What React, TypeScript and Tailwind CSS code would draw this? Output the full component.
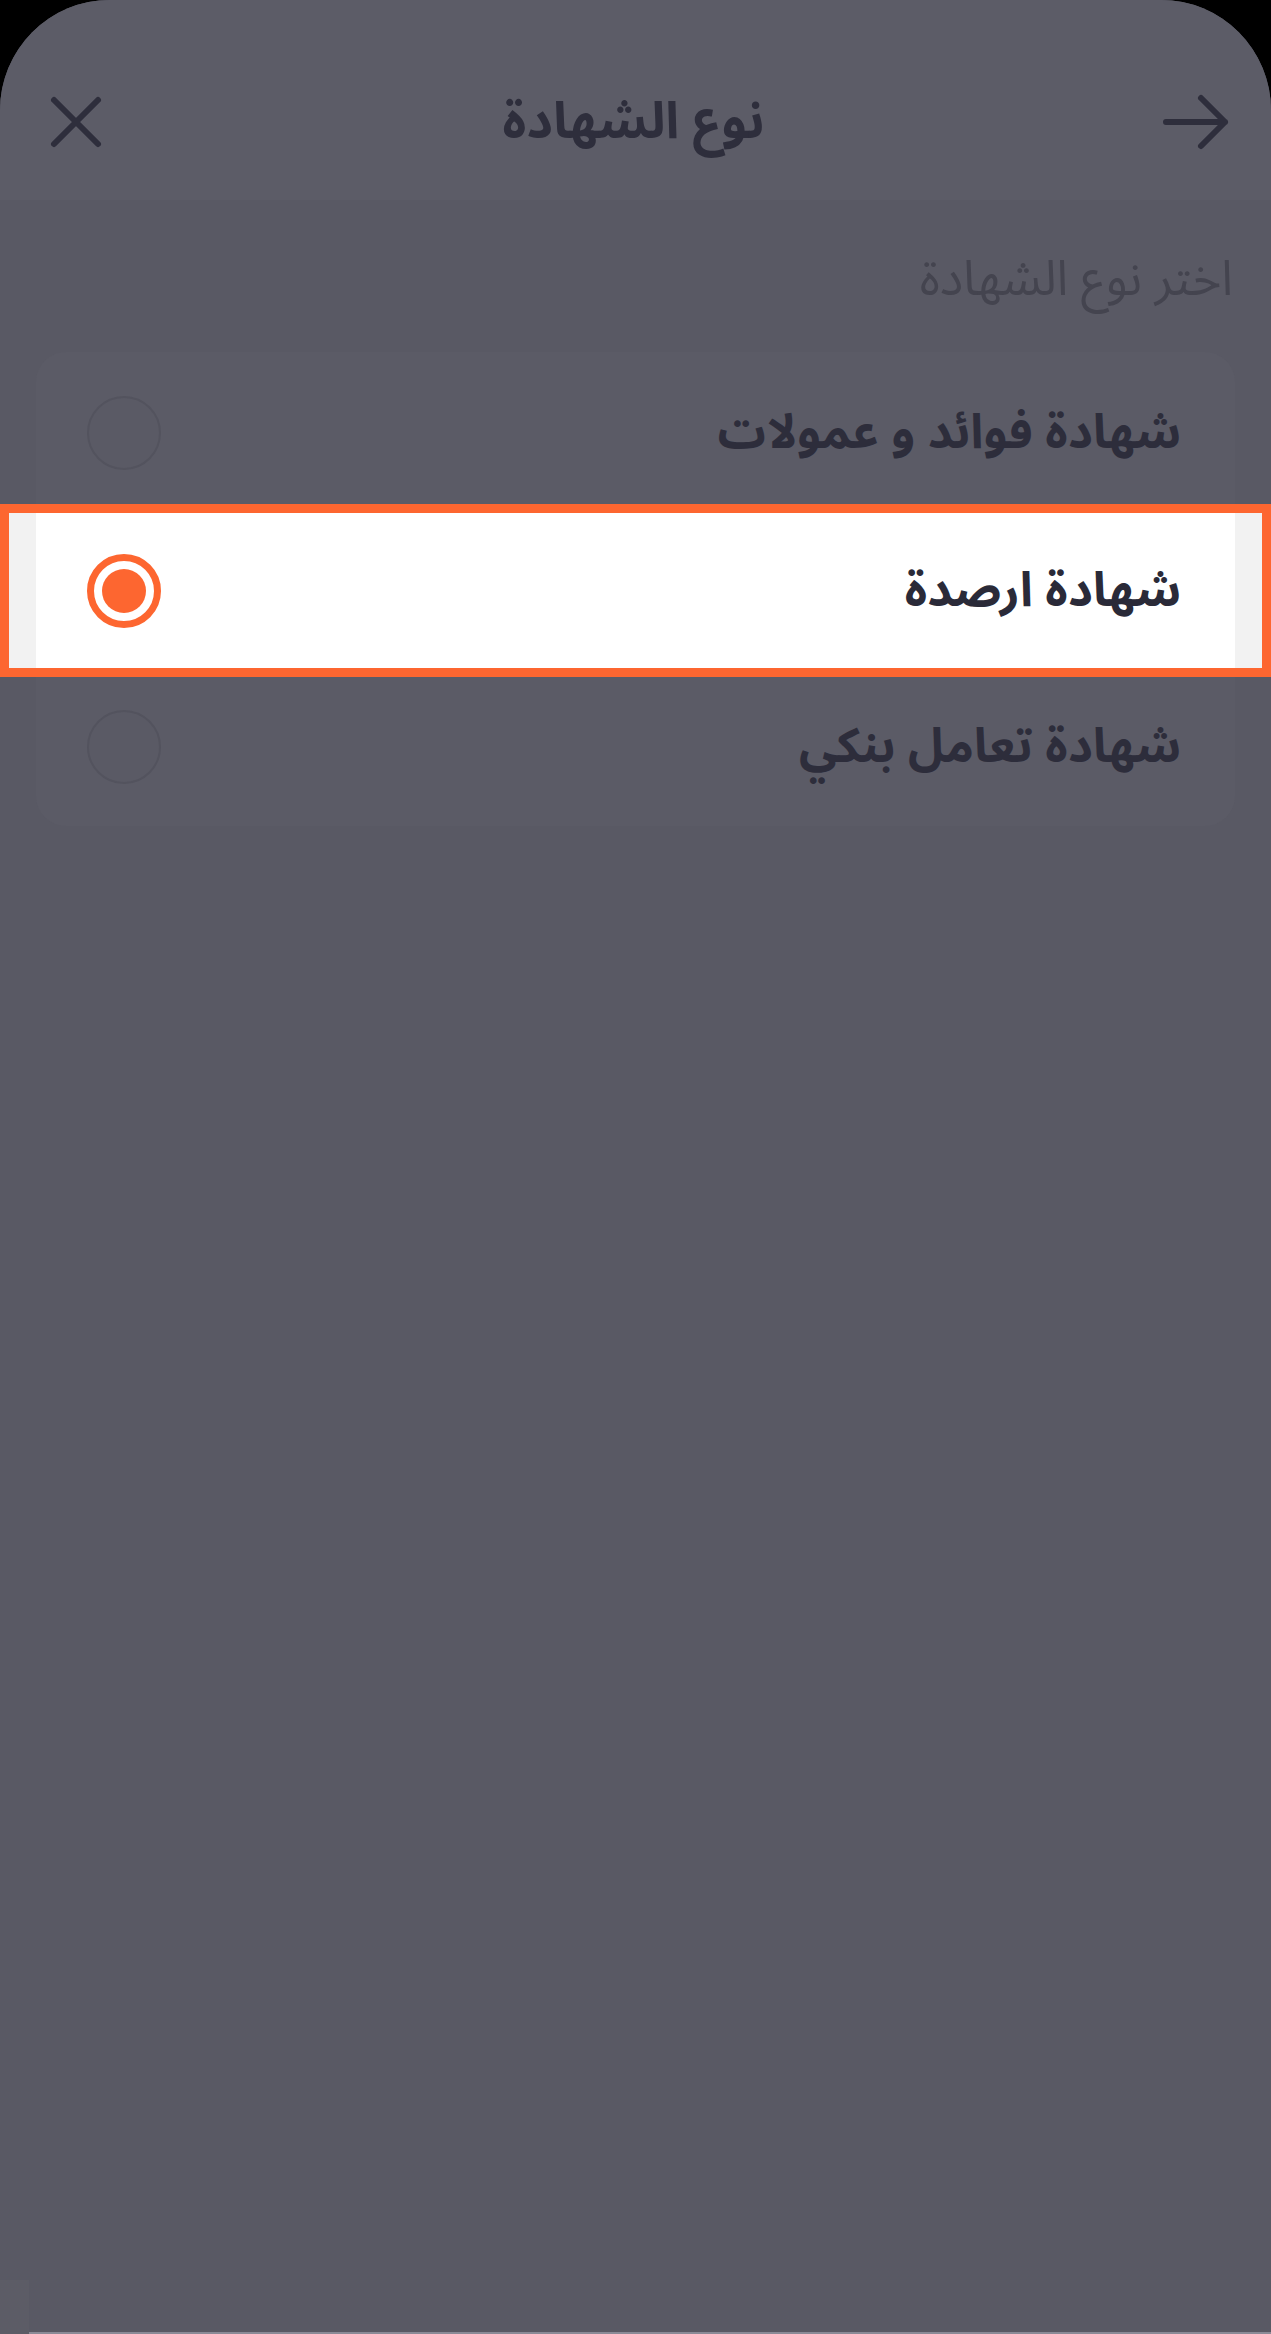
import React from "react";

function CloseIcon() {
  return (
    <svg width="60" height="60" viewBox="0 0 60 60" fill="none">
      <path d="M8 8 L52 52 M52 8 L8 52" stroke="#2e2e3c" strokeWidth="6" strokeLinecap="round" />
    </svg>
  );
}

function ArrowIcon() {
  return (
    <svg width="70" height="60" viewBox="0 0 70 60" fill="none">
      <path d="M5 30 L64 30 M40 6 L64 30 L40 54" stroke="#2e2e3c" strokeWidth="6" strokeLinecap="round" strokeLinejoin="round" />
    </svg>
  );
}

function Radio({ selected }: { selected: boolean }) {
  if (selected) {
    return (
      <div className="w-[74px] h-[74px] rounded-full border-[7px] border-[#fd6630] bg-white flex items-center justify-center">
        <div className="w-[44px] h-[44px] rounded-full bg-[#fd6630]" />
      </div>
    );
  }
  return <div className="w-[74px] h-[74px] rounded-full border-[2px] border-[#53535e] bg-[#5a5a65]" />;
}

const font = "font-['Noto_Sans_Arabic','DejaVu_Sans',sans-serif]";

export default function App() {
  return (
    <div className={`w-[1271px] h-[2334px] bg-black ${font}`}>
      <div className="h-full rounded-t-[110px] bg-[#595964] flex flex-col overflow-hidden">
        <header className="h-[200px] shrink-0 bg-[#5c5c67] flex items-center justify-between pl-[46px] pr-[40px] pt-[44px]">
          <CloseIcon />
          <h1 className="text-[51px] font-bold text-[#2e2e3c] leading-none">نوع الشهادة</h1>
          <ArrowIcon />
        </header>
        <main dir="rtl" className="flex-1 flex flex-col px-[36px]">
          <p className="mt-[48px] text-[49px] leading-[64px] text-[#44444f] pr-[2px]">اختر نوع الشهادة</p>
          <div className="mt-[40px] rounded-[30px] bg-[#5b5b66] flex flex-col">
            <div className="h-[161px] flex items-center justify-between pr-[54px] pl-[51px]">
              <span className="text-[48px] font-bold text-[#2d2d3b]">شهادة فوائد و عمولات</span>
              <Radio selected={false} />
            </div>
            <div className="-mx-[36px] border-[9px] border-[#fd6630] bg-[#f2f2f2] px-[27px] -my-[9px] relative">
              <div className="h-[155px] bg-white flex items-center justify-between pr-[54px] pl-[51px]">
                <span className="text-[48px] font-bold text-[#2a2a38]">شهادة ارصدة</span>
                <Radio selected={true} />
              </div>
            </div>
            <div className="h-[158px] flex items-center justify-between pr-[54px] pl-[51px]">
              <span className="text-[48px] font-bold text-[#2d2d3b]">شهادة تعامل بنكي</span>
              <Radio selected={false} />
            </div>
          </div>
        </main>
        <div className="h-[54px] shrink-0 flex">
          <div className="w-[29px] bg-[#5c5c66]" />
          <div className="flex-1 flex flex-col">
            <div className="flex-1 bg-[#595964]" />
            <div className="h-[2px] bg-[#8a8a96]" />
          </div>
        </div>
      </div>
    </div>
  );
}
